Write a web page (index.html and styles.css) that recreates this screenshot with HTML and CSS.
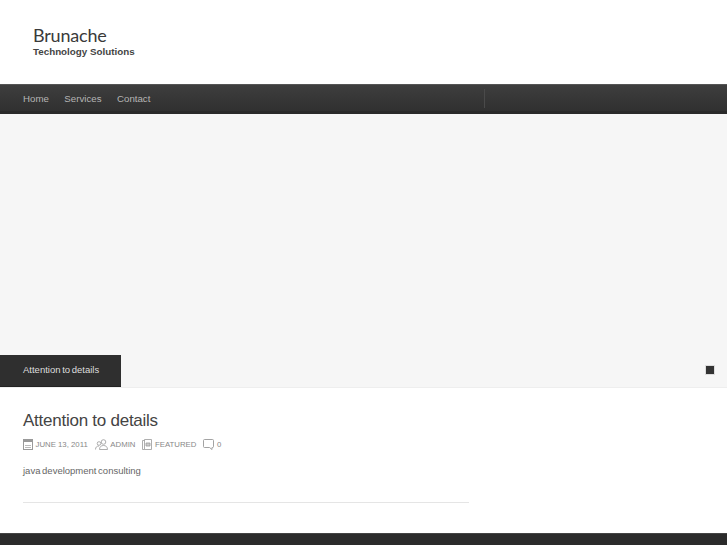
FILE: index.html
```html
<!DOCTYPE html>
<html lang="en">
<head>
<meta charset="utf-8">
<title>Brunache</title>
<link rel="stylesheet" href="styles.css">
</head>
<body>
<header class="site-header">
  <div class="logo">
    <div class="logo-name">Brunache</div>
    <div class="logo-tag">Technology Solutions</div>
  </div>
</header>
<nav class="main-nav">
  <ul class="nav-list">
    <li>Home</li>
    <li>Services</li>
    <li>Contact</li>
  </ul>
  <div class="nav-divider"></div>
</nav>
<section class="slider">
  <div class="slider-caption">Attention to details</div>
  <div class="slider-dot"></div>
</section>
<main class="content">
  <article class="post">
    <h1 class="post-title">Attention to details</h1>
    <div class="post-meta">
      <span class="meta-item">
        <svg class="icon" width="10" height="11" viewBox="0 0 10 11"><rect x=".5" y=".5" width="9" height="10" fill="#fff" stroke="#999"/><rect x="1" y="1" width="8" height="2" fill="#999"/><path d="M2 6.500h6M2 8.500h6" stroke="#bbb"/></svg>
        June 13, 2011
      </span>
      <span class="meta-item">
        <svg class="icon" width="13" height="11" viewBox="0 0 13 11" fill="none" stroke="#999" stroke-width=".8"><circle cx="8.500" cy="3" r="2.300"/><path d="M4.500 10.500c0-2.600 1.600-4 4-4s4 1.400 4 4z"/><circle cx="4" cy="4.500" r="1.800"/><path d="M.5 10.500c0-2.300 1.300-3.500 3.500-3.500"/></svg>
        Admin
      </span>
      <span class="meta-item">
        <svg class="icon" width="10" height="11" viewBox="0 0 10 11" fill="none" stroke="#999" stroke-width=".8"><path d="M2.500.5h7v10h-7z"/><path d="M2.500 1.500h-2v9h2"/><path d="M4 4h4v3h-4z" fill="#ccc"/></svg>
        Featured
      </span>
      <span class="meta-item">
        <svg class="icon" width="11" height="11" viewBox="0 0 11 11" fill="none" stroke="#999" stroke-width=".9"><path d="M1.500.5h8a1 1 0 0 1 1 1v6a1 1 0 0 1-1 1h-.5v2l-2.500-2h-5a1 1 0 0 1-1-1v-6a1 1 0 0 1 1-1z"/></svg>
        0
      </span>
    </div>
    <p class="post-excerpt">java development consulting</p>
  </article>
</main>
<footer class="site-footer"></footer>
</body>
</html>
```
FILE: styles.css
```css
html, body {
  margin: 0;
  padding: 0;
  background: #fff;
  height: 545px;
  overflow: hidden;
  font-family: "Liberation Sans", Arial, sans-serif;
}
.site-header {
  height: 84px;
  padding: 25px 0 0 33px;
  box-sizing: border-box;
}
.logo-name {
  font-family: "Lato", sans-serif;
  font-size: 18px;
  font-weight: 400;
  line-height: 20px;
  letter-spacing: -.2px;
  color: #3a3a3a;
}
.logo-tag {
  margin-top: 1px;
  font-size: 9.800px;
  font-weight: 700;
  line-height: 11px;
  color: #444;
}
.main-nav {
  display: flex;
  align-items: center;
  height: 30px;
  box-sizing: border-box;
  padding-left: 23px;
  border-top: 1px solid #555;
  border-bottom: 3px solid #2a2a2a;
  background: linear-gradient(#3e3e3e, #303030);
}
.nav-list {
  display: flex;
  gap: 15.500px;
  width: 461px;
  margin: 0;
  padding: 0;
  list-style: none;
  font-size: 9.700px;
  color: #b5b5b5;
}
.nav-divider {
  width: 1px;
  height: 19px;
  background: #4a4a4a;
}
.slider {
  position: relative;
  display: flex;
  align-items: flex-end;
  justify-content: space-between;
  height: 273px;
  background: #f6f6f6;
  border-bottom: 1px solid #eee;
  box-sizing: content-box;
}
.slider-caption {
  width: 121px;
  height: 32px;
  box-sizing: border-box;
  padding-left: 23px;
  font-size: 9.500px;
  word-spacing: -1px;
  line-height: 30px;
  color: #ddd;
  background: #2f2f2f;
  border-bottom: 1px solid #222;
}
.slider-dot {
  width: 8px;
  height: 8px;
  margin: 0 13px 13px 0;
  background: #333;
  outline: 1px solid #ddd;
}
.content {
  padding: 23px 0 0 23px;
  height: 145px;
  box-sizing: border-box;
}
.post {
  width: 446px;
  height: 91px;
  border-bottom: 1px solid #e5e5e5;
}
.post-title {
  margin: 0;
  font-size: 17px;
  font-weight: 400;
  line-height: 20px;
  letter-spacing: -.25px;
  color: #444;
}
.post-meta {
  display: flex;
  margin-top: 8px;
  font-size: 7.800px;
  line-height: 11px;
  text-transform: uppercase;
  color: #888;
}
.meta-item {
  display: flex;
  align-items: center;
  gap: 2.500px;
  margin-right: 7px;
}
.post-excerpt {
  margin: 15px 0 0;
  font-size: 9.500px;
  word-spacing: -1px;
  line-height: 12px;
  color: #666;
}
.site-footer {
  height: 12px;
  background: #2b2b2b;
  border-top: 1px solid #444;
  box-sizing: border-box;
}
```
